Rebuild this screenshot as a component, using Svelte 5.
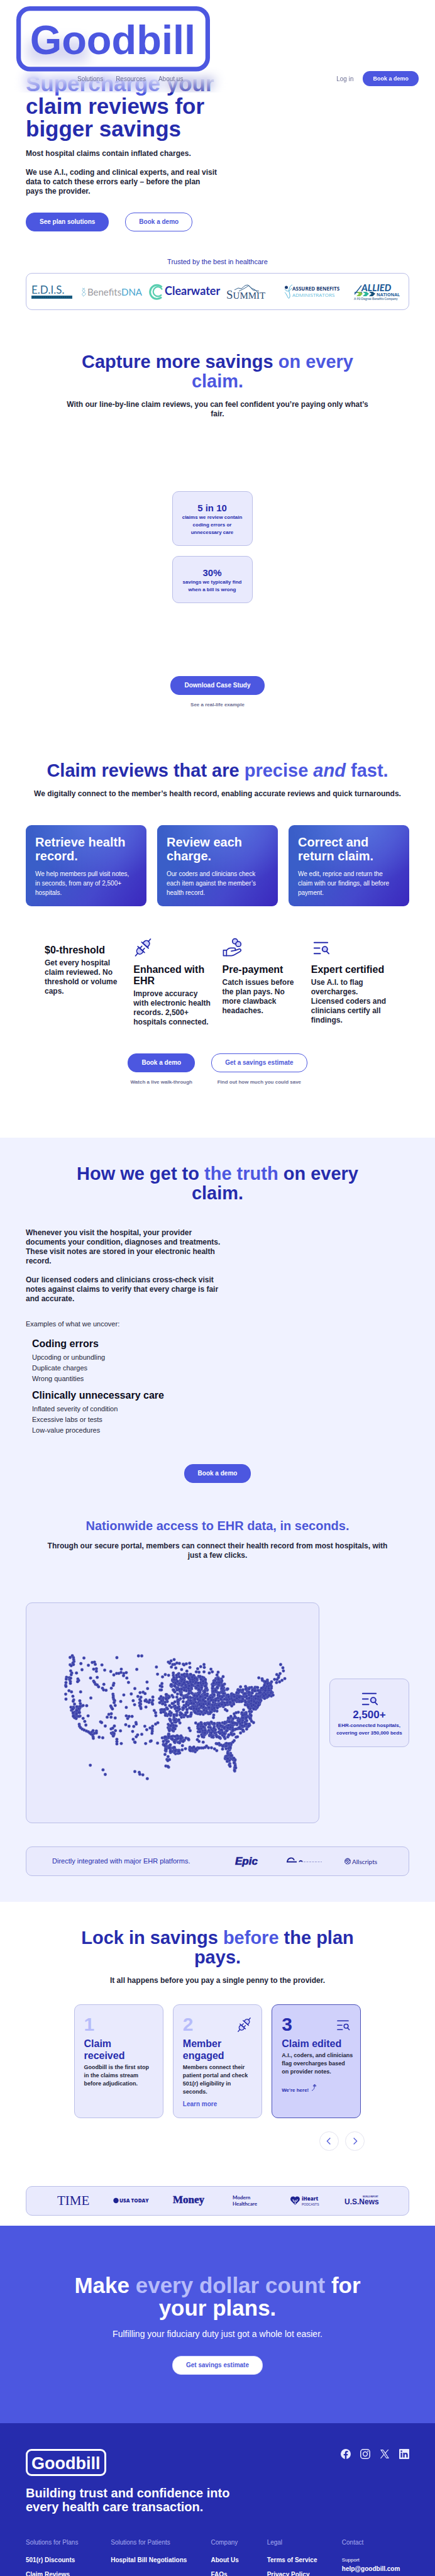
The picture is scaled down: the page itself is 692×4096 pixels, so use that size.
<script>
  const MAP_W = 466;
  const MAP_H = 350;
  const project = ([x, y]) => ({ x: (x - 94) * 0.4413, y: (y - 64) * 0.3063 });

  const sparse = `252,347 260,338 264,348 265,358 266,368 262,376 264,384 252,385 256,390 302,350 291,379 318,388
  332,373 340,371 343,383 367,386 295,411 254,417 258,428 275,428 256,437 239,450 249,452 238,460 250,462 254,455
  253,472 253,482 237,478 236,492 237,498 248,520 257,526 290,526 236,538 237,564 262,549 280,459 283,467 279,473
  337,408 347,406 347,419 377,413 326,454 350,451 337,470 340,477 344,487 350,490 355,500 374,487 369,507 373,516
  382,518 410,482 408,492 401,507 421,348 499,339 511,339 493,409 564,397 437,408 399,420 410,438 420,430 428,430
  436,425 446,430 455,426 445,442 457,454 463,477 486,509 530,475 532,509 473,537 446,542 407,538 408,548 408,557
  410,566 413,572 411,582 435,576 415,597 399,600 402,608 405,615 327,558 265,568 263,575 268,590 287,573 289,587
  294,600 299,597 312,598 255,606 257,622 299,664 305,680 309,699 317,651 285,695 286,705 290,713 296,720 303,725
  311,730 318,734 323,740 330,736 335,728 340,742 347,730 347,740 328,746 333,750 335,760 336,768 357,762 370,765
  362,682 366,686 379,704 386,658 392,643 401,640 400,658 415,662 412,704 400,719 406,715 416,728 434,729 401,741
  405,746 410,750 407,738 411,743 408,756 421,773 421,785 421,797 437,795 455,607 480,572 485,593 505,530 516,528
  523,535 497,550 508,554 504,566 507,575 503,584 507,590 504,598 507,606 508,613 526,568 530,577 523,573 537,581
  540,569 551,553 551,570 548,582 550,590 526,605 455,651 460,665 465,654 476,654 453,697 465,705 482,706 490,686
  491,694 478,732 522,705 529,723 541,714 550,705 549,719 549,731 548,742 511,747 496,750 491,760 480,773 485,787
  487,789 525,795 542,784 545,781 568,793 568,434 586,448 596,436 608,440 578,495 584,483 584,499 577,516 582,516
  556,623 561,635 562,650 561,694 569,687 325,908 371,932 379,956 486,941 502,945 504,955 515,958 531,978 607,371
  612,377 617,365 628,358 623,384 618,397 630,383 638,376 647,378 661,382 664,386 672,380 684,377 685,399 655,410
  634,402 674,418 625,428 625,440 713,406 724,395 736,384 737,399 761,408 708,422 718,424 736,422 755,428 766,422
  787,424 783,438 805,447 1013,384 1021,401 1023,417 1011,431 999,436 1006,443 1005,452 1028,457 1018,466 1000,462
  991,461 1009,474 998,478 934,453 946,458 947,466 954,472 965,465 980,474 908,503 921,502 927,503 886,498 868,500
  606,863 602,878 611,879 605,884 598,912 608,918 605,914 633,848 642,846 657,828 669,822 684,824 697,822 704,838
  710,828 716,820 726,818 733,818 740,815 745,808 752,817 763,817 774,823 782,832 803,824 845,780 840,788 852,762
  857,760 868,740 915,686 806,603 813,618 819,624 752,640 771,647 770,660 682,715 686,728 706,688 658,806 595,852
  816,822 733,788 718,784 712,775 795,768 812,769 847,938`
    .split(/\s+/)
    .map((p) => p.split(',').map(Number));

  const regions = [
    [[[640, 430], [700, 435], [745, 450], [750, 545], [690, 560], [640, 545], [615, 500], [620, 460]], 260],
    [[[765, 480], [785, 445], [800, 460], [822, 510], [808, 540], [766, 535]], 95],
    [[[700, 545], [770, 540], [810, 545], [850, 530], [870, 565], [840, 600], [800, 600], [780, 632], [740, 645], [700, 640], [690, 600]], 300],
    [[[862, 508], [940, 500], [960, 470], [985, 475], [978, 515], [990, 545], [950, 560], [925, 620], [890, 600], [862, 585], [840, 545]], 190],
    [[[890, 590], [920, 545], [970, 530], [990, 542], [945, 570], [922, 622], [895, 612]], 110],
    [[[815, 655], [880, 618], [912, 630], [908, 690], [880, 740], [830, 720]], 120],
    [[[712, 685], [830, 680], [846, 745], [820, 765], [716, 762]], 170],
    [[[575, 545], [635, 530], [690, 560], [692, 665], [650, 690], [600, 665], [575, 640]], 130],
    [[[605, 665], [650, 665], [640, 700], [618, 745], [606, 770], [606, 690]], 40],
    [[[578, 755], [640, 745], [692, 775], [640, 795], [608, 780], [600, 850], [592, 812]], 70],
    [[[608, 790], [645, 820], [650, 845], [632, 852], [600, 838]], 28],
    [[[680, 812], [720, 815], [708, 838], [684, 832]], 16],
    [[[776, 795], [836, 790], [832, 812], [795, 810]], 20],
    [[[822, 812], [833, 810], [836, 855], [854, 885], [854, 930], [846, 935], [842, 890], [814, 884], [812, 866]], 50],
    [[[814, 866], [828, 880], [832, 916], [824, 905]], 12],
    [[[256, 605], [288, 600], [290, 655], [272, 670], [262, 650]], 44]
  ];

  function inside([x, y], poly) {
    let hit = false;
    for (let i = 0, j = poly.length - 1; i < poly.length; j = i++) {
      const [xi, yi] = poly[i];
      const [xj, yj] = poly[j];
      if (yi > y !== yj > y && x < ((xj - xi) * (y - yi)) / (yj - yi) + xi) hit = !hit;
    }
    return hit;
  }

  let seed = 77;
  const rand = () => (seed = (seed * 16807) % 2147483647) / 2147483647;

  function fill([poly, count]) {
    const xs = poly.map((p) => p[0]);
    const ys = poly.map((p) => p[1]);
    const [x0, x1, y0, y1] = [Math.min(...xs), Math.max(...xs), Math.min(...ys), Math.max(...ys)];
    const out = [];
    while (out.length < count) {
      const p = [x0 + rand() * (x1 - x0), y0 + rand() * (y1 - y0)];
      if (inside(p, poly)) out.push(p);
    }
    return out;
  }

  const hospitals = [...sparse, ...regions.flatMap(fill)].map(project);

  const services = [
    ['Retrieve health record.', 'We help members pull visit notes, in seconds, from any of 2,500+ hospitals.'],
    ['Review each charge.', 'Our coders and clinicians check each item against the member’s health record.'],
    ['Correct and return claim.', 'We edit, reprice and return the claim with our findings, all before payment.']
  ];

  const features = [
    { title: '$0-threshold', text: 'Get every hospital claim reviewed. No threshold or volume caps.' },
    { icon: 'plug', title: 'Enhanced with EHR', text: 'Improve accuracy with electronic health records. 2,500+ hospitals connected.' },
    { icon: 'hand', title: 'Pre-payment', text: 'Catch issues before the plan pays. No more clawback headaches.' },
    { icon: 'search', title: 'Expert certified', text: 'Use A.I. to flag overcharges. Licensed coders and clinicians certify all findings.' }
  ];

  const findings = [
    ['Coding errors', ['Upcoding or unbundling', 'Duplicate charges', 'Wrong quantities']],
    ['Clinically unnecessary care', ['Inflated severity of condition', 'Excessive labs or tests', 'Low-value procedures']]
  ];

  const footerColumns = [
    ['Solutions for Plans', ['501(r) Discounts', 'Claim Reviews']],
    ['Solutions for Patients', ['Hospital Bill Negotiations']],
    ['Company', ['About Us', 'FAQs']],
    ['Legal', ['Terms of Service', 'Privacy Policy']]
  ];
</script>

{#snippet logo()}
  <svg class="logo" viewBox="0 0 128 43" role="img" aria-label="Goodbill">
    <rect x="1.5" y="1.5" width="125" height="40" rx="7.5" fill="none" stroke="currentColor" stroke-width="3" />
    <text x="9" y="31.6" font-size="27" font-weight="700" fill="currentColor">Goodbill</text>
  </svg>
{/snippet}

{#snippet icon(name)}
  <svg class="icon" viewBox="0 0 32 32" fill="none" stroke="currentColor" stroke-width="1.8" stroke-linecap="round" stroke-linejoin="round" aria-hidden="true">
    {#if name === 'plug'}
      <g transform="rotate(42 16 16)">
        <path d="M11 11V7.500a5 5 0 0 1 10 0V11z" fill="#d0d1fb" />
        <path d="M8.500 11h15M16 2.500v-5" />
        <path d="M11 20.500V24a5 5 0 0 0 10 0v-3.500z" fill="#d0d1fb" />
        <path d="M8.500 20.500h15M13.200 20.500v-5M18.800 20.500v-5M16 29.500v5" />
      </g>
    {:else if name === 'hand'}
      <circle cx="20.5" cy="6" r="4.2" fill="#d0d1fb" />
      <circle cx="26" cy="10.5" r="4.2" fill="#d0d1fb" />
      <path d="M1.500 20.500h5v9h-5z" />
      <path d="M6.500 21c2-2.700 4.500-4.200 7-4.200h5.500c2.600 0 3.200 3.700.4 4.300l-5 .9" />
      <path d="M20.500 21l6.500-2.300c3-.9 4.300 2.500 1.800 4l-8.600 5c-2 1.200-3.500 1.800-5.700 1.800h-8" />
    {:else}
      <path d="M5 8h22M5 17h9M5 26h10" stroke-width="2" />
      <circle cx="22.5" cy="18.8" r="4.2" fill="#d0d1fb" stroke-width="2" />
      <path d="M25.500 22.500l3.500 3.700" stroke-width="2" />
    {/if}
  </svg>
{/snippet}

<div class="page">
  <header class="topbar">
    <div class="glass"></div>
    <a class="brand" href="#home">{@render logo()}</a>
    <div class="navrow">
      <nav>
        <a href="#solutions">Solutions</a>
        <a href="#resources">Resources</a>
        <a href="#about">About us</a>
      </nav>
      <a class="login" href="#login">Log in</a>
      <button class="btn small">Book a demo</button>
    </div>
  </header>

  <main>
    <section class="hero wrap">
      <span class="glow"></span>
      <h1><em>Supercharge</em> your claim reviews for bigger savings</h1>
      <div class="copy">
        <p>Most hospital claims contain inflated charges.</p>
        <p>We use A.I., coding and clinical experts, and real visit data to catch these errors early – before the plan pays the provider.</p>
      </div>
      <div class="actions">
        <button class="btn">See plan solutions</button>
        <button class="btn outline">Book a demo</button>
      </div>
      <p class="trusted">Trusted by the best in healthcare</p>
      <div class="clients">
        <svg width="66" height="20" viewBox="0 0 66 20" role="img" aria-label="E.D.I.S.">
          <text x="0" y="13" font-family="Lato" font-size="17" fill="#2a6a94">E.D.I.S.</text>
          <rect x="0" y="16" width="65" height="5" fill="#1b5f84" />
          <path d="M2 18.500h61" stroke="#0f4566" stroke-width="1.5" stroke-dasharray="2 1" />
        </svg>
        <svg width="104" height="20" viewBox="0 0 104 20" role="img" aria-label="BenefitsDNA">
          <path d="M2 4c5 3 5 5 2 7s-3 4 0 6M6 4c-5 3-5 5-1 7s2 4-2 6" fill="none" stroke="#6db5d3" stroke-width=".8" />
          <text x="10" y="16" font-family="Lato" font-size="15" fill="#9a9a9f">Benefits<tspan fill="#46a5cf">DNA</tspan></text>
        </svg>
        <svg width="116" height="28" viewBox="0 0 116 28" role="img" aria-label="Clearwater">
          <g fill="none" stroke="#59ceb0" stroke-width="3">
            <path d="M21.500 6.500a11 11 0 1 0-.5 16" />
            <path d="M22 10.500a7.500 7.500 0 1 0-1 8" stroke-width="2.2" />
            <path d="M7 24.500c3-2 5 2 8 0s4-1 6-1.500" stroke-width="1.5" />
          </g>
          <text x="26" y="19" font-family="Lato" font-weight="700" font-size="18" fill="#262ca8">Clearwater</text>
        </svg>
        <svg width="74" height="26" viewBox="0 0 74 26" role="img" aria-label="Summit">
          <path d="M13 10l6-3 5 1 6-5 4-1 6 5 6 3 4 4M20 12l8-4 8-5 6 7 10 2" fill="none" stroke="#34618c" stroke-width="1" />
          <text x="0" y="24" font-family="Liberation Serif" font-size="19" fill="#2b4d77">S<tspan font-size="15">UMMIT</tspan></text>
        </svg>
        <svg width="92" height="24" viewBox="0 0 92 24" role="img" aria-label="Assured Benefits Administrators">
          <circle cx="4.5" cy="5" r="2.5" fill="#1a3b73" />
          <path d="M14 1C10 2 8 8 9 12s2 8 0 10-3-6-7-9M2 8c4 5 8 3 11-2" fill="none" stroke="#4fb2d8" stroke-width="1" />
          <text x="14" y="10" font-family="Open Sans" font-weight="700" font-size="8" fill="#1a3b73">ASSURED BENEFITS</text>
          <text x="14" y="20" font-family="Open Sans" font-size="8" fill="#62bbdc">ADMINISTRATORS</text>
        </svg>
        <svg width="74" height="24" viewBox="0 0 74 24" role="img" aria-label="Allied National, a 90 Degree Benefits Company">
          <text x="12" y="11" font-family="Lato" font-weight="900" font-style="italic" font-size="15" fill="#235d99">ALLIED</text>
          <path d="M1 16L12 2M1 13h12" stroke="#235d99" stroke-width="1.5" />
          <path d="M4 12h6l4 3-4 4H4l4-4z" fill="#86c548" />
          <path d="M14 12h6l4 3-4 4h-6l4-4z" fill="#2bb59a" />
          <path d="M24 12h6l4 3-4 4h-6l4-4z" fill="#174f78" />
          <text x="36" y="19" font-family="Open Sans" font-weight="700" font-size="7" fill="#235d99">NATIONAL</text>
          <text x="0" y="25" font-family="Lato" font-weight="700" font-size="5" fill="#5279a0">A 90 Degree Benefits Company</text>
        </svg>
      </div>
    </section>

    <section class="capture wrap">
      <h2>Capture more savings <em>on every claim.</em></h2>
      <p class="sub">With our line-by-line claim reviews, you can feel confident you’re paying only what’s fair.</p>
      <div class="stats">
        <div class="panel stat"><strong>5 in 10</strong><span>claims we review contain coding errors or unnecessary care</span></div>
        <div class="panel stat"><strong>30%</strong><span>savings we typically find when a bill is wrong</span></div>
      </div>
      <div class="cta">
        <div><button class="btn">Download Case Study</button><small>See a real-life example</small></div>
      </div>
    </section>

    <section class="reviews wrap">
      <h2>Claim reviews that are <em>precise <i>and</i> fast.</em></h2>
      <p class="sub">We digitally connect to the member’s health record, enabling accurate reviews and quick turnarounds.</p>
      <div class="services">
        {#each services as [title, text]}
          <article><h3>{title}</h3><p>{text}</p></article>
        {/each}
      </div>
      <div class="features">
        {#each features as f}
          <div>
            <div class="slot">{#if f.icon}{@render icon(f.icon)}{/if}</div>
            <h4>{f.title}</h4>
            <p>{f.text}</p>
          </div>
        {/each}
      </div>
      <div class="cta">
        <div><button class="btn">Book a demo</button><small>Watch a live walk-through</small></div>
        <div><button class="btn outline">Get a savings estimate</button><small>Find out how much you could save</small></div>
      </div>
    </section>

    <section class="truth">
      <div class="wrap">
        <h2>How we get to <em>the truth</em> on every claim.</h2>
        <div class="copy">
          <p>Whenever you visit the hospital, your provider documents your condition, diagnoses and treatments. These visit notes are stored in your electronic health record.</p>
          <p>Our licensed coders and clinicians cross-check visit notes against claims to verify that every charge is fair and accurate.</p>
        </div>
        <p class="examples">Examples of what we uncover:</p>
        {#each findings as [title, items]}
          <div class="finding">
            <h4>{title}</h4>
            <ul>{#each items as item}<li>{item}</li>{/each}</ul>
          </div>
        {/each}
        <div class="cta"><div><button class="btn">Book a demo</button></div></div>
        <h3 class="national">Nationwide access to EHR data, in seconds.</h3>
        <p class="sub wide">Through our secure portal, members can connect their health record from most hospitals, with just a few clicks.</p>
        <div class="coverage">
          <div class="panel map">
            <svg viewBox="0 0 {MAP_W} {MAP_H}" role="img" aria-label="Map of connected hospitals">
              {#each hospitals as h}
                <circle cx={h.x} cy={h.y} r="2.4" />
              {/each}
            </svg>
          </div>
          <div class="panel reach">
            {@render icon('search')}
            <strong>2,500+</strong>
            <span>EHR-connected hospitals, covering over 350,000 beds</span>
          </div>
        </div>
        <div class="panel ehr">
          <p>Directly integrated with major EHR platforms.</p>
          <svg width="40" height="18" viewBox="0 0 40 18" role="img" aria-label="Epic">
            <text x="0" y="14" font-weight="700" font-style="italic" font-size="17" fill="#1e2391" stroke="#1e2391" stroke-width=".7">Epic</text>
          </svg>
          <svg width="56" height="14" viewBox="0 0 56 14" aria-hidden="true" fill="none" stroke="#1e2391">
            <path d="M1 7c1-6 9-8 11-2M0 7.500h16" stroke-width="1.8" />
            <path d="M20 7.500c1-2.500 4-2.500 5 0" stroke-width="2" />
            <path d="M27 7.500h29" stroke-width="1" stroke-dasharray="3 1.5" opacity=".4" />
          </svg>
          <svg width="60" height="18" viewBox="0 0 60 18" role="img" aria-label="Allscripts">
            <g fill="none" stroke="#1e2391" stroke-width=".8">
              <circle cx="5" cy="8.5" r="4.5" />
              <path d="M1 6l7 7M2.500 4.500l7 7M5 4l4.500 4.500M9 6l-7 7M7.500 4.500l-7 6M1 8.500l4-4.500" />
            </g>
            <text x="12" y="13" font-family="Lato" font-size="10" fill="#1e2391">Allscripts</text>
          </svg>
        </div>
      </div>
    </section>

    <section class="lock wrap">
      <h2>Lock in savings <em>before</em> the plan pays.</h2>
      <p class="sub">It all happens before you pay a single penny to the provider.</p>
      <div class="steps">
        <article class="panel">
          <div class="head"><b>1</b></div>
          <h4>Claim received</h4>
          <p>Goodbill is the first stop in the claims stream before adjudication.</p>
        </article>
        <article class="panel">
          <div class="head"><b>2</b>{@render icon('plug')}</div>
          <h4>Member engaged</h4>
          <p>Members connect their patient portal and check 501(r) eligibility in seconds.</p>
          <a href="#learn">Learn more</a>
        </article>
        <article class="panel active">
          <div class="head"><b>3</b>{@render icon('search')}</div>
          <h4>Claim edited</h4>
          <p>A.I., coders, and clinicians flag overcharges based on provider notes.</p>
          <div class="here">
            We're here!
            <svg width="9" height="12" viewBox="0 0 9 12" fill="none" stroke="currentColor" stroke-width=".9" aria-hidden="true"><path d="M1 11c3-.5 4.500-3.500 4.500-9M3 4l2.500-3L8 4z" /></svg>
          </div>
        </article>
      </div>
      <div class="pager">
        <button aria-label="Previous"><svg viewBox="0 0 12 12"><path d="M7.500 2L3.500 6l4 4" /></svg></button>
        <button aria-label="Next"><svg viewBox="0 0 12 12"><path d="M4.500 2l4 4-4 4" /></svg></button>
      </div>
      <div class="panel press">
        <svg width="54" height="20" viewBox="0 0 54 20" role="img" aria-label="TIME"><text x="0" y="17" font-family="Liberation Serif" font-size="21">TIME</text></svg>
        <svg width="58" height="16" viewBox="0 0 58 16" role="img" aria-label="USA Today"><circle cx="4.5" cy="8" r="4.2" /><text x="10" y="11" font-family="Open Sans" font-weight="800" font-size="8">USA TODAY</text></svg>
        <svg width="54" height="20" viewBox="0 0 54 20" role="img" aria-label="Money"><text x="0" y="14" font-family="Liberation Serif" font-weight="700" font-size="17" stroke="#1e2391" stroke-width=".5">Money</text></svg>
        <svg width="50" height="18" viewBox="0 0 50 18" role="img" aria-label="Modern Healthcare"><text x="0" y="7" font-family="Lato" font-weight="700" font-size="8">Modern</text><text x="0" y="17" font-family="Lato" font-weight="700" font-size="8">Healthcare</text></svg>
        <svg width="52" height="18" viewBox="0 0 52 18" role="img" aria-label="iHeart Podcasts">
          <path d="M8.500 16L2 9.500C-1 5 4 0 8.500 4 13 0 18 5 15 9.500z" />
          <path d="M5 7c0 2 1 3 2 4M12 7c0 2-1 3-2 4M8.500 8v7" fill="none" stroke="#e9eafd" stroke-width="1.2" />
          <text x="19" y="9" font-family="Open Sans" font-weight="800" font-size="8">iHeart</text>
          <text x="19" y="17" font-size="5">PODCASTS</text>
        </svg>
        <svg width="58" height="18" viewBox="0 0 58 18" role="img" aria-label="U.S. News and World Report"><text x="0" y="15" font-weight="700" font-size="12">U.S.News</text><text x="29" y="4" font-weight="700" font-size="3">WORLD REPORT</text></svg>
      </div>
    </section>

    <section class="closing wrap">
      <h2>Make <em>every dollar count</em> for your plans.</h2>
      <p>Fulfilling your fiduciary duty just got a whole lot easier.</p>
      <button class="btn light">Get savings estimate</button>
    </section>
  </main>

  <footer class="wrap">
    <div class="foottop">
      <div class="footbrand">{@render logo()}</div>
      <div class="social">
        <a href="#facebook" aria-label="Facebook"><svg viewBox="0 0 16 16"><path fill-rule="evenodd" d="M16 8a8 8 0 1 0-9.250 7.900V10.300H4.700V8h2.050V6.200c0-2 1.200-3.100 3-3.100.9 0 1.800.15 1.800.15v2h-1c-1 0-1.300.6-1.300 1.250V8h2.200l-.35 2.300H9.250v5.600A8 8 0 0 0 16 8z" /></svg></a>
        <a href="#instagram" aria-label="Instagram"><svg viewBox="0 0 16 16"><g fill="none" stroke="currentColor" stroke-width="1.5"><rect x=".8" y=".8" width="14.4" height="14.4" rx="4" /><circle cx="8" cy="8" r="3.4" /></g><circle cx="12.2" cy="3.8" r="1" /></svg></a>
        <a href="#x" aria-label="X"><svg viewBox="0 0 16 16"><path fill-rule="evenodd" d="M1 1h4.500l3.400 4.700L13 1h1.500L9.600 6.700 15 15h-4.500L6.800 9.500 2.200 15H.8l5.300-6.500zm2.200 1.200L11 13.800h1.900L5 2.200z" /></svg></a>
        <a href="#linkedin" aria-label="LinkedIn"><svg viewBox="0 0 16 16"><path fill-rule="evenodd" d="M1 0h14a1 1 0 0 1 1 1v14a1 1 0 0 1-1 1H1a1 1 0 0 1-1-1V1a1 1 0 0 1 1-1zm1.400 6v7.600h2.400V6zM3.600 2.200a1.400 1.400 0 1 0 0 2.800 1.400 1.400 0 0 0 0-2.800zM6.300 6v7.600h2.400V9.800c0-2.200 2.600-2.200 2.600 0v3.800h2.400V9c0-3.600-3.800-3.800-5-1.800V6z" /></svg></a>
      </div>
    </div>
    <p class="tagline">Building trust and confidence into every health care transaction.</p>
    <div class="links">
      {#each footerColumns as [title, items]}
        <div>
          <h5>{title}</h5>
          {#each items as item}<a href="#{item}">{item}</a>{/each}
        </div>
      {/each}
      <div>
        <h5>Contact</h5>
        <span>Support</span>
        <a href="mailto:help@goodbill.com">help@goodbill.com</a>
      </div>
    </div>
  </footer>
</div>

<style>
  :global(body) { margin: 0; background: #fff; }
  .page {
    position: relative;
    max-height: 100vh;
    overflow: hidden;
    font-family: "Liberation Sans", Arial, sans-serif;
    color: #24263a;
  }
  h1, h2, h3, h4, h5, p, ul { margin: 0; padding: 0; }
  a { color: inherit; text-decoration: none; }
  em { font-style: normal; color: #4c57e0; }
  svg { display: block; overflow: visible; }
  .wrap { padding-left: 41px; padding-right: 41px; }

  .topbar {
    position: absolute;
    inset: 0 0 auto 0;
    z-index: 2;
    padding: 10px 26px;
  }
  .glass {
    position: absolute;
    inset: 0;
    background: rgba(255, 255, 255, 0.2);
    backdrop-filter: blur(9px);
    mask-image: linear-gradient(#000 82%, rgba(0, 0, 0, 0.5));
  }
  .brand { position: relative; display: block; width: 308px; color: #4c57e0; }
  .logo { width: 100%; height: auto; }
  .navrow {
    position: relative;
    display: flex;
    align-items: center;
    padding-left: 97px;
    font-size: 10px;
    color: #6c6e93;
  }
  nav { display: flex; gap: 20px; flex: 1; }
  .login { margin-right: 15px; }

  .btn {
    font: 700 10px/14px "Liberation Sans", Arial, sans-serif;
    padding: 7px 21px;
    border: 1px solid #4c57e0;
    border-radius: 14px;
    background: #4c57e0;
    color: #fff;
  }
  .btn.small { font-size: 9px; padding: 4px 15px; border-radius: 11px; }
  .btn.outline { background: #fff; color: #4c57d8; }
  .btn.light { background: #fff; color: #4c57d8; border-color: #d5d8fb; }

  .hero { position: relative; padding-top: 115px; }
  .glow {
    position: absolute;
    left: 44px;
    top: 64px;
    width: 96px;
    height: 34px;
    background: rgba(60, 64, 190, 0.25);
  }
  h1 { font-size: 35px; line-height: 36px; color: #262cad; max-width: 312px; }
  .copy {
    max-width: 312px;
    display: grid;
    gap: 15px;
    font-weight: 700;
    font-size: 12px;
    line-height: 15px;
  }
  .hero .copy { margin-top: 14px; max-width: 306px; }
  .actions { display: flex; gap: 26px; margin-top: 26px; }
  .trusted { margin-top: 40px; text-align: center; font-size: 11px; line-height: 16px; color: #262cad; }
  .clients {
    display: grid;
    grid-template-columns: 80fr 107fr 125fr 92fr 113fr 71fr;
    align-items: center;
    margin-top: 10px;
    padding: 15px 13px 14px 8px;
    border: 1px solid #babee8;
    border-radius: 10px;
  }

  h2 {
    font-size: 29px;
    line-height: 31px;
    color: #262cad;
    text-align: center;
    max-width: 560px;
    margin: 0 auto;
  }
  .sub {
    max-width: 490px;
    margin: 14px auto 0;
    text-align: center;
    font-weight: 700;
    font-size: 12px;
    line-height: 15px;
  }
  .panel { background: #e9eafd; border: 1px solid #babee8; border-radius: 10px; }

  .capture { padding-top: 67px; }
  .capture h2, .truth h2, .lock h2 { max-width: 480px; }
  .stats { display: grid; gap: 16px; width: 128px; margin: 115px auto 116px; padding-right: 17px; }
  .stat { padding: 17px 12px 14px; text-align: center; color: #262cad; }
  .stat strong { display: block; font-size: 15px; line-height: 18px; }
  .stat span, .reach span { font-weight: 700; font-size: 8px; line-height: 12px; display: block; }
  .cta { display: flex; justify-content: center; gap: 26px; }
  .cta div { display: grid; justify-items: center; gap: 10px; }
  small { font-weight: 700; font-size: 8px; line-height: 12px; color: #6c6e93; }

  .reviews { padding-top: 83px; padding-bottom: 82px; }
  .reviews .sub { max-width: 609px; }
  .services { display: grid; grid-template-columns: repeat(3, 1fr); gap: 17px; margin-top: 42px; }
  .services article {
    padding: 16px 20px 14px 15px;
    border-radius: 9px;
    color: #fff;
    background:
      radial-gradient(circle at 60% -10%, rgba(96, 124, 230, 0.8), transparent 60%),
      linear-gradient(125deg, #3a5ec8 25%, #4548cc 65%, #3a28bd);
  }
  .services h3 { font-size: 20px; line-height: 22px; }
  .services p { margin-top: 10px; font-size: 10px; line-height: 15px; }
  .features {
    display: grid;
    grid-template-columns: repeat(4, 1fr);
    gap: 15px;
    margin: 50px 30px 42px;
  }
  .icon { width: 31px; height: 31px; color: #262cad; }
  .slot { margin-bottom: 11px; }
  h4 { font-size: 16px; line-height: 18px; color: #0c0d1c; }
  .features p { margin-top: 4px; font-weight: 700; font-size: 12px; line-height: 15px; }

  .truth { background: #f0f2ff; padding: 42px 0 41px; }
  .truth .copy { margin-top: 40px; }
  .examples { margin: 24px 0 15px; font-size: 11px; line-height: 16px; }
  .finding { margin: 0 0 9px 10px; }
  .finding ul { margin-top: 4px; list-style: none; font-size: 11px; line-height: 17px; }
  .truth .cta { margin-top: 45px; }
  .national { margin-top: 57px; text-align: center; font-size: 20px; line-height: 22px; color: #4c57d8; }
  .sub.wide { max-width: 556px; }
  .coverage {
    display: grid;
    grid-template-columns: 466fr 127fr;
    gap: 16px;
    align-items: center;
    margin: 67px 0 37px;
  }
  .map circle { fill: #3a40a8; stroke: #7f85cc; stroke-width: 0.3; }
  .reach {
    display: grid;
    justify-items: center;
    padding: 15px 8px;
    text-align: center;
    color: #262cad;
  }
  .reach strong { font-size: 17px; line-height: 22px; }
  .ehr {
    display: grid;
    grid-template-columns: 291fr 82fr 92fr 61fr;
    align-items: center;
    padding: 13px 41px;
    color: #262cad;
    font-size: 11px;
    line-height: 19px;
  }

  .lock { padding-top: 42px; padding-bottom: 16px; }
  .steps {
    display: grid;
    grid-template-columns: repeat(3, 1fr);
    gap: 15px;
    max-width: 457px;
    margin: 30px auto 0;
  }
  .steps article { padding: 13px 12px 14px 15px; }
  .steps .active { background: #d0d1fb; border-color: #4a50b8; }
  .head { display: flex; justify-content: space-between; align-items: center; }
  .head b { font-size: 30px; line-height: 36px; color: #b7bcfa; }
  .active b { color: #262cad; }
  .head .icon { width: 25px; height: 25px; margin-right: 3px; }
  .steps h4 { margin-top: 3px; line-height: 19px; color: #262cad; max-width: 104px; }
  .steps p { margin-top: 3px; font-weight: 700; font-size: 9px; line-height: 13px; }
  .steps a { display: block; margin-top: 6px; font-weight: 700; font-size: 10px; line-height: 14px; color: #4c57d8; }
  .here {
    display: flex;
    align-items: flex-end;
    gap: 4px;
    margin-top: 12px;
    font-weight: 700;
    font-size: 8px;
    line-height: 10px;
    color: #262cad;
  }
  .here svg { margin-bottom: 4px; }
  .pager { display: flex; justify-content: flex-end; gap: 10px; max-width: 467px; margin: 21px auto 56px; }
  .pager button {
    display: grid;
    place-items: center;
    width: 31px;
    height: 31px;
    padding: 0;
    border: 1px solid #e4e4ef;
    border-radius: 50%;
    background: #fff;
  }
  .pager svg { width: 15px; height: 15px; fill: none; stroke: #4c57d8; }
  .press {
    display: grid;
    grid-template-columns: 89fr 95fr 95fr 91fr 87fr 61fr;
    align-items: center;
    padding: 12px 41px 13px 49px;
    fill: #1e2391;
  }

  .closing { padding-top: 77px; padding-bottom: 77px; background: #4c57e0; color: #fff; text-align: center; }
  .closing h2 { font-size: 35px; line-height: 36px; color: #fff; max-width: 480px; }
  .closing em { color: #b7bcfa; }
  .closing p { margin: 14px 0 26px; font-size: 14px; line-height: 18px; }

  footer { padding-top: 41px; padding-bottom: 41px; background: #262cad; color: #fff; }
  .foottop { display: flex; justify-content: space-between; align-items: flex-start; }
  .footbrand { width: 128px; }
  .social { display: flex; gap: 15px; color: #e9eafd; }
  .social svg { width: 16px; height: 16px; fill: currentColor; }
  .tagline { margin-top: 16px; max-width: 340px; font-weight: 700; font-size: 20px; line-height: 22px; }
  .links {
    display: grid;
    grid-template-columns: 135fr 159fr 89fr 119fr 107fr;
    margin-top: 39px;
    font-size: 10px;
    line-height: 14px;
  }
  h5 { margin-bottom: 14px; font-size: 10px; font-weight: 400; color: #a7abf0; }
  .links a { display: block; margin-bottom: 9px; font-weight: 700; }
  .links span { display: block; font-size: 8px; }
</style>
